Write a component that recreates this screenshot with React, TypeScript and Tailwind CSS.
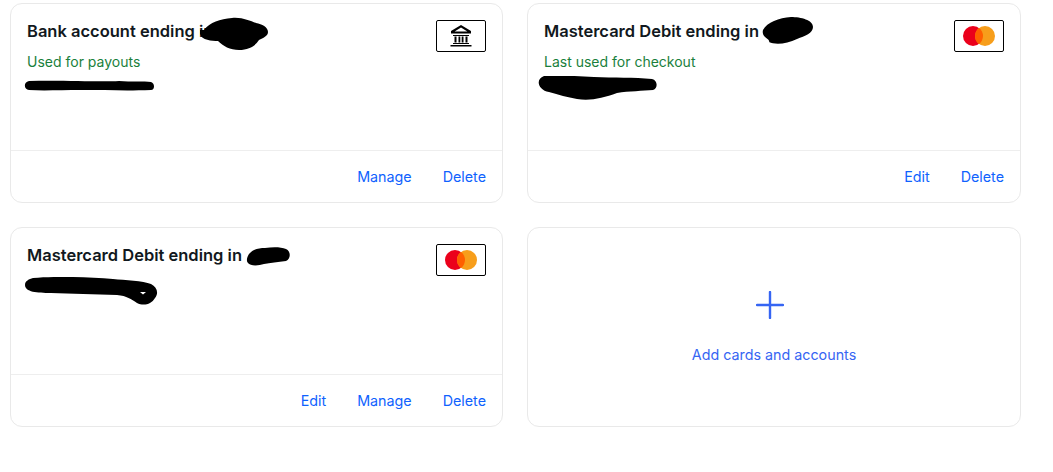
import type { ReactNode } from "react";

function BankIcon() {
  return (
    <svg width="22" height="22" viewBox="0 0 22 22" fill="none">
      <path d="M11 0 1 6v2.5h20V6L11 0Zm0 2.4 6.4 4H4.6L11 2.4Z" fill="#000" fillRule="evenodd" />
      <path d="M3 10h16v1H3zM4.5 11.5h2v6h-2zM8.5 11.5h1.8v6H8.5zM11.7 11.5h1.8v6h-1.8zM15.5 11.5h2v6h-2zM3 18h16v1H3zM0.5 20h21v1.6H.5z" fill="#000" />
    </svg>
  );
}

function MastercardIcon() {
  return (
    <svg width="34" height="22" viewBox="0 0 34 22">
      <circle cx="11" cy="11" r="10" fill="#eb001b" />
      <circle cx="23" cy="11" r="10" fill="#f79e1b" />
      <path d="M17 3a10 10 0 0 1 0 16 10 10 0 0 1 0-16Z" fill="#ff5f00" />
    </svg>
  );
}

function Scribble({ className, d, w, h, children }: { className: string; d: string; w: number; h: number; children?: ReactNode }) {
  return (
    <svg className={`absolute ${className}`} width={w} height={h} viewBox={`0 0 ${w} ${h}`}>
      <path d={d} fill="#000" />
      {children}
    </svg>
  );
}

function CardLogo({ children }: { children: ReactNode }) {
  return (
    <div className="flex h-8 w-[50px] items-center justify-center rounded-[2px] border border-black bg-white">
      {children}
    </div>
  );
}

function Card({
  title,
  status,
  logo,
  actions,
  children,
}: {
  title: string;
  status?: string;
  logo: ReactNode;
  actions: string[];
  children?: ReactNode;
}) {
  return (
    <div className="relative flex h-[200px] flex-col rounded-xl border border-[#e9e9e9] bg-white">
      <div className="flex h-[146px] items-start justify-between pt-4 pr-4 pl-4">
        <div>
          <h3 className="-mt-px text-[16.5px] leading-6 font-semibold whitespace-nowrap text-[#111820]">{title}</h3>
          {status && <p className="mt-[9px] text-sm leading-5 text-[#1a7f3c]">{status}</p>}
        </div>
        {logo}
      </div>
      <div className="flex flex-1 items-center justify-end gap-[31px] border-t border-[#eeeeee] pr-4 text-[14.3px] text-[#0f62fe]">
        {actions.map((a) => (
          <span key={a}>{a}</span>
        ))}
      </div>
      {children}
    </div>
  );
}

export default function App() {
  return (
    <div className="h-[472px] w-[1053px] overflow-hidden bg-white pt-[3px] pl-[10px] font-['Inter','Liberation_Sans',sans-serif]">
      <div className="grid w-[1011px] grid-cols-[493px_494px] gap-x-6 gap-y-6">
        <Card
          title="Bank account ending in"
          status="Used for payouts"
          logo={
            <CardLogo>
              <BankIcon />
            </CardLogo>
          }
          actions={["Manage", "Delete"]}
        >
          <Scribble
            className="top-3 left-[189px]"
            w={70}
            h={36}
            d="M4 14C10 6 20 3 32 2c10-1 18 3 24 5 6 1 12 4 12 9 0 4-5 6-9 8-4 6-10 10-20 10-9 0-16-4-21-9-7 0-20-1-18-11Z"
          />
          <Scribble
            className="top-[76px] left-[13px]"
            w={132}
            h={12}
            d="M5 1c30-1 70 1 90 0 12 1 25 0 32 1 4 1 4 8 0 8-25 1-45 0-70 0-20 0-38 1-52 0C0 10-1 2 5 1Z"
          />
        </Card>
        <Card
          title="Mastercard Debit ending in"
          status="Last used for checkout"
          logo={
            <CardLogo>
              <MastercardIcon />
            </CardLogo>
          }
          actions={["Edit", "Delete"]}
        >
          <Scribble
            className="top-3 left-[233px]"
            w={54}
            h={30}
            d="M2 14C6 6 18 2 30 1c10 0 22 3 22 10 0 6-8 9-16 12-10 5-22 6-28 3C10 23 0 22 2 14Z"
          />
          <Scribble
            className="top-[72px] left-[10px]"
            w={120}
            h={24}
            d="M6 0c14-1 32 0 50 1 20 1 40 0 58 2 6 1 6 10 1 11-10 1-24 1-36 3-14 5-26 8-40 6-10-2-18-4-28-7C0 14-3 3 6 0Z"
          />
        </Card>
        <Card
          title="Mastercard Debit ending in"
          logo={
            <CardLogo>
              <MastercardIcon />
            </CardLogo>
          }
          actions={["Edit", "Manage", "Delete"]}
        >
          <Scribble
            className="top-[19px] left-[235px]"
            w={46}
            h={20}
            d="M3 7c4-5 10-6 16-6 8-1 16-1 21 1 5 2 5 10 0 12-8 1-16 2-22 3-6 2-14 2-16-1C0 14 1 10 3 7Z"
          />
          <Scribble
            className="top-[49px] left-[14px]"
            w={134}
            h={29}
            d="M8 1c24-2 56-1 80 1 12 1 30 2 38 5 6 3 8 9 4 14-4 7-12 8-18 5-6-4-10-7-20-8-22-1-46-1-66-2C12 16 0 15 0 8 0 4 4 2 8 1Z"
          >
            <path d="M115 15h6l-3 2.5Z" fill="#fff" />
          </Scribble>
        </Card>
        <div className="flex h-[200px] flex-col items-center rounded-xl border border-[#e9e9e9] bg-white pt-[63px]">
          <svg className="mr-2" width="28" height="28" viewBox="0 0 28 28" fill="none">
            <path d="M14 1v26M1 14h26" stroke="#3665f3" strokeWidth="2.4" strokeLinecap="round" />
          </svg>
          <span className="mt-[26px] text-[14.3px] leading-5 text-[#3665f3]">Add cards and accounts</span>
        </div>
      </div>
    </div>
  );
}
